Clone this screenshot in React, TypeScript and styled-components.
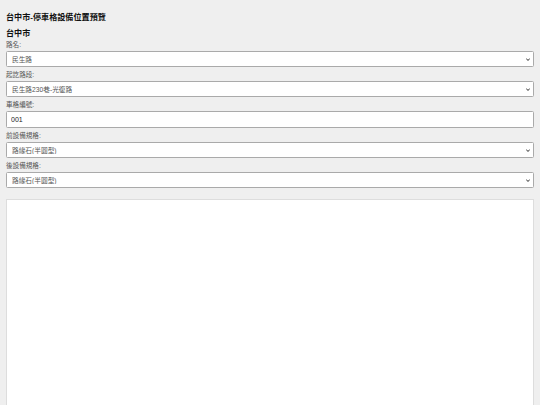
import React, { useState } from "react";
import styled, { createGlobalStyle } from "styled-components";

const GlobalStyle = createGlobalStyle`
  html, body {
    margin: 0;
    padding: 0;
    background: #efefef;
  }
  body {
    font-family: "Liberation Sans", "Noto Sans CJK TC", sans-serif;
  }
`;

const Page = styled.div`
  padding: 12px 6px 0 6px;
  display: flex;
  flex-direction: column;
`;

const Title = styled.h1`
  margin: 0;
  font-size: 8.1px;
  line-height: 12px;
  font-weight: bold;
  color: #111;
`;

const City = styled.h2`
  margin: 4px 0 0;
  font-size: 8.1px;
  line-height: 12px;
  font-weight: bold;
  color: #111;
`;

const Field = styled.div`
  display: flex;
  flex-direction: column;
  gap: 1px;
  margin-bottom: 3px;
`;

const Label = styled.label`
  font-size: 6.6px;
  line-height: 10px;
  color: #555;
`;

const SelectWrap = styled.div`
  position: relative;
  height: 16px;
`;

const Select = styled.select`
  appearance: none;
  -webkit-appearance: none;
  display: block;
  height: 16px;
  width: 100%;
  box-sizing: border-box;
  border: 1px solid #aaa;
  border-radius: 1.5px;
  background: #fff;
  color: #555;
  font-family: inherit;
  font-size: 6.7px;
  padding: 0 12px 0 5px;
  margin: 0;
  outline: none;
`;

const Arrow = styled.svg`
  position: absolute;
  right: 4px;
  top: 6.5px;
  width: 4px;
  height: 3px;
  pointer-events: none;
`;

const Input = styled.input`
  display: block;
  height: 17px;
  width: 100%;
  box-sizing: border-box;
  border: 1px solid #aaa;
  border-radius: 1.5px;
  background: #fff;
  color: #222;
  font-family: inherit;
  font-size: 7px;
  padding: 0 4px;
  margin: 0;
  outline: none;
`;

const MapBox = styled.div`
  margin-top: 8px;
  height: 260px;
  background: #fff;
  border: 1px solid #ddd;
`;

const roads = ["民生路", "中山路", "自由路"];
const sections = ["民生路230巷-光復路", "光復路-中山路"];
const specs = ["路緣石(半圓型)", "路緣石(方型)"];

type DropProps = {
  value: string;
  options: string[];
  onChange: (v: string) => void;
};

const Dropdown = ({ value, options, onChange }: DropProps) => (
  <SelectWrap>
    <Select value={value} onChange={(e) => onChange(e.target.value)}>
      {options.map((o) => (
        <option key={o}>{o}</option>
      ))}
    </Select>
    <Arrow viewBox="0 0 8 6">
      <path d="M0.5 1 L4 5 L7.5 1" fill="none" stroke="#333" strokeWidth="2" />
    </Arrow>
  </SelectWrap>
);

function App() {
  const [road, setRoad] = useState(roads[0]);
  const [section, setSection] = useState(sections[0]);
  const [slot, setSlot] = useState("001");
  const [front, setFront] = useState(specs[0]);
  const [back, setBack] = useState(specs[0]);

  return (
    <Page>
      <GlobalStyle />
      <Title>台中市-停車格設備位置預覽</Title>
      <City>台中市</City>
      <Field>
        <Label>路名:</Label>
        <Dropdown value={road} options={roads} onChange={setRoad} />
      </Field>
      <Field>
        <Label>起訖路段:</Label>
        <Dropdown value={section} options={sections} onChange={setSection} />
      </Field>
      <Field>
        <Label>車格編號:</Label>
        <Input value={slot} onChange={(e) => setSlot(e.target.value)} />
      </Field>
      <Field>
        <Label>前設備規格:</Label>
        <Dropdown value={front} options={specs} onChange={setFront} />
      </Field>
      <Field>
        <Label>後設備規格:</Label>
        <Dropdown value={back} options={specs} onChange={setBack} />
      </Field>
      <MapBox />
    </Page>
  );
}

export default App;
